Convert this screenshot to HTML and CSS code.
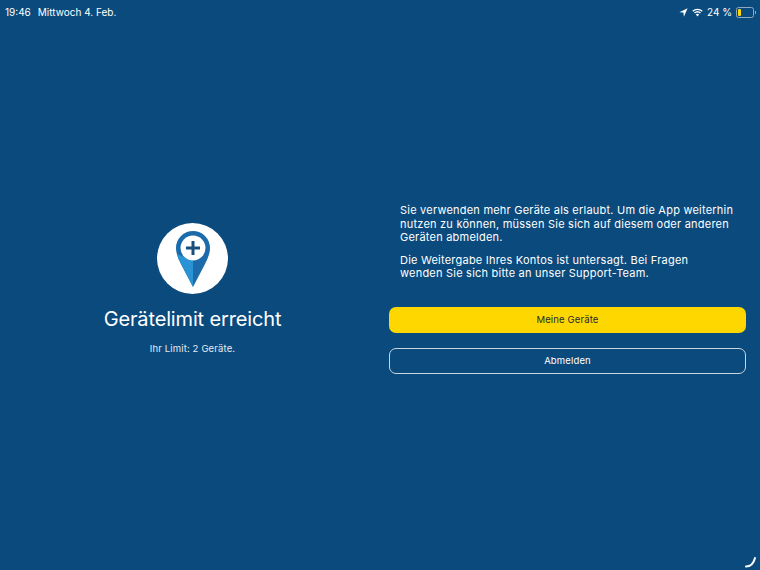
FILE: index.html
```html
<!DOCTYPE html>
<html>
<head>
    <title>Gerätelimit erreicht</title>
    <link rel="stylesheet" href="styles.css">
</head>
<body>
    <!-- Statusleiste -->
    <div class="status-bar">
        <div class="status-left">
            <span>19:46</span>
            <span>Mittwoch 4. Feb.</span>
        </div>
        <div class="status-right">
            <svg class="icon-location" width="9" height="9" viewBox="0 0 10 10">
                <path d="M9.6 0.4 L0.4 4.6 L4.9 5.1 L5.4 9.6 Z" fill="#fff"/>
            </svg>
            <svg class="icon-wifi" width="11" height="9" viewBox="0 0 22 17">
                <path d="M1.5 6 A14 14 0 0 1 20.5 6" fill="none" stroke="#fff" stroke-width="2.6"/>
                <path d="M5 9.6 A9 9 0 0 1 17 9.6" fill="none" stroke="#fff" stroke-width="2.6"/>
                <path d="M11 16.5 L7.6 12.6 A5 5 0 0 1 14.4 12.6 Z" fill="#fff"/>
            </svg>
            <span>24 %</span>
            <div class="battery">
                <div class="battery-body"><div class="battery-level"></div></div>
                <div class="battery-tip"></div>
            </div>
        </div>
    </div>

    <!-- Inhalt -->
    <div class="content">
        <div class="left">
            <div class="logo-circle">
                <svg width="34" height="56" viewBox="0 0 34 56">
                    <path d="M17 0 A17 17 0 0 1 34 17 C34 23 31 29 29 33 L17 56 L5 33 C3 29 0 23 0 17 A17 17 0 0 1 17 0 Z" fill="#1b6bab"/>
                    <path d="M1 23 C2 27 3 29 5 33 L17 56 L17 30 Z" fill="#2a93d5"/>
                    <circle cx="17" cy="17" r="12.5" fill="#fff"/>
                    <path d="M17 10 V24 M10 17 H24" stroke="#17507f" stroke-width="3" fill="none"/>
                </svg>
            </div>
            <h1>Gerätelimit erreicht</h1>
            <p class="limit">Ihr Limit: 2 Geräte.</p>
        </div>
        <div class="right">
            <div class="message">
                <p>Sie verwenden mehr Geräte als erlaubt. Um die App weiterhin nutzen zu können, müssen Sie sich auf diesem oder anderen Geräten abmelden.</p>
                <p>Die Weitergabe Ihres Kontos ist untersagt. Bei Fragen<br>wenden Sie sich bitte an unser Support-Team.</p>
            </div>
            <button class="btn btn-primary">Meine Geräte</button>
            <button class="btn btn-outline">Abmelden</button>
        </div>
    </div>

    <svg class="spinner" width="12" height="12" viewBox="0 0 12 12">
        <path d="M1 10.5 C5 10.5 8.5 8 10 2" fill="none" stroke="#fff" stroke-width="2" stroke-linecap="round"/>
    </svg>
</body>
</html>
```
FILE: styles.css
```css
body {
    background-color: #0b4a7d;
    color: white;
    font-family: Inter, "Liberation Sans", sans-serif;
    margin: 0;
    padding: 0;
    width: 760px;
    height: 570px;
    overflow: hidden;
    position: relative;
}
.status-bar {
    display: flex;
    justify-content: space-between;
    align-items: center;
    height: 24px;
    padding: 0 4px 0 5px;
    font-size: 10px;
}
.status-left {
    display: flex;
    gap: 7px;
}
.status-right {
    display: flex;
    align-items: center;
    gap: 4px;
}
.battery {
    display: flex;
    align-items: center;
}
.battery-body {
    width: 14px;
    height: 7px;
    border: 1px solid #8fa9c0;
    border-radius: 2.5px;
    padding: 1px;
}
.battery-level {
    width: 3px;
    height: 100%;
    background-color: #ffd60a;
    border-radius: 1px;
}
.battery-tip {
    width: 1px;
    height: 3px;
    background-color: #8fa9c0;
    margin-left: 1px;
}
.content {
    display: flex;
    height: 546px;
}
.left {
    width: 385px;
    display: flex;
    flex-direction: column;
    align-items: center;
    padding-top: 199px;
}
.logo-circle {
    width: 71px;
    height: 71px;
    border-radius: 50%;
    background-color: white;
    display: flex;
    justify-content: center;
    align-items: center;
}
.left h1 {
    font-size: 20px;
    font-weight: normal;
    letter-spacing: -0.15px;
    margin: 12px 0 0 0;
    line-height: 26px;
}
.left .limit {
    font-size: 9.5px;
    letter-spacing: 0.15px;
    margin: 11px 0 0 0;
    color: #e4ebf1;
}
.right {
    flex: 1;
    padding: 180px 14px 0 4px;
    display: flex;
    flex-direction: column;
}
.message {
    padding: 0 11px;
    margin-bottom: 17px;
    font-size: 11px;
    letter-spacing: 0.22px;
    line-height: 13.5px;
}
.message p {
    margin: 0 0 9px 0;
}
.btn {
    font-family: Inter, "Liberation Sans", sans-serif;
    font-size: 9.5px;
    letter-spacing: 0.15px;
    height: 26px;
    border-radius: 7px;
    padding: 0;
}
.btn-primary {
    background-color: #ffd700;
    color: #1d2a33;
    border: none;
    margin-bottom: 15px;
}
.btn-outline {
    background-color: transparent;
    color: white;
    border: 1px solid #c9d6e1;
}
.spinner {
    position: absolute;
    right: 3px;
    bottom: 2px;
}
```
